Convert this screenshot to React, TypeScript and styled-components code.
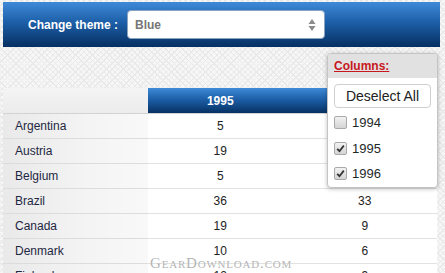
import React from "react";
import styled, { createGlobalStyle } from "styled-components";

const GlobalStyle = createGlobalStyle`
  html, body {
    margin: 0;
    padding: 0;
    width: 445px;
    height: 273px;
    overflow: hidden;
    font-family: "Liberation Sans", Arial, sans-serif;
    background-color: #f6f6f6;
    background-image:
      repeating-linear-gradient(45deg, transparent 0 3px, #e9e9e9 3px 4px),
      repeating-linear-gradient(-45deg, transparent 0 3px, #e9e9e9 3px 4px);
  }
`;

const Page = styled.div`
  position: relative;
  padding: 2px 0 0 3px;
`;

const ThemeBar = styled.div`
  width: 437px;
  height: 45px;
  display: flex;
  align-items: center;
  gap: 9px;
  padding-left: 25px;
  box-sizing: border-box;
  background: linear-gradient(to bottom, #3f8ad8 0%, #1d5fa8 45%, #063062 100%);
`;

const ThemeLabel = styled.span`
  color: #fff;
  font-size: 12px;
  font-weight: bold;
`;

const ThemeSelect = styled.div`
  width: 198px;
  height: 29px;
  box-sizing: border-box;
  background: #fff;
  border: 1px solid #8aa3c0;
  border-radius: 4px;
  display: flex;
  align-items: center;
  justify-content: space-between;
  padding: 0 8px 0 7px;
  color: #767676;
  font-size: 12px;
  font-weight: bold;
`;

const Table = styled.table`
  margin-top: 41px;
  width: 434px;
  border-collapse: collapse;
  table-layout: fixed;
  font-size: 12px;
`;

const HeadCorner = styled.th`
  width: 145px;
  height: 25px;
  padding: 0;
  background: linear-gradient(to bottom, #f4f4f4, #ececec);
  border-bottom: 1px solid #d2d2d2;
`;

const HeadYear = styled.th`
  height: 25px;
  padding: 0;
  color: #fff;
  font-weight: bold;
  text-align: center;
  background: linear-gradient(to bottom, #3f8ad8 0%, #1d5fa8 45%, #063062 100%);
  border-bottom: 1px solid #d2d2d2;
`;

const CountryCell = styled.td`
  height: 24px;
  padding: 0 0 0 12px;
  color: #1e2742;
  background: linear-gradient(to right, #e9e9e9, #f4f4f4 60%, #f8f8f8);
  border-bottom: 1px solid #dcdcdc;
`;

const ValueCell = styled.td`
  height: 24px;
  padding: 0;
  text-align: center;
  color: #222;
  background: #fff;
  border-bottom: 1px solid #e2e2e2;
`;

const ColumnsPopup = styled.div`
  position: absolute;
  left: 327px;
  top: 53px;
  width: 111px;
  height: 135px;
  box-sizing: border-box;
  background: #fff;
  border: 1px solid #c4c4c4;
  border-radius: 4px;
  box-shadow: 0 1px 4px rgba(0, 0, 0, 0.25);
  overflow: hidden;
`;

const PopupTitle = styled.div`
  height: 24px;
  background: #e1e1e1;
  padding: 5px 0 0 6px;
  box-sizing: border-box;
  color: #c8161d;
  font-size: 12px;
  font-weight: bold;
  text-decoration: underline;
`;

const DeselectButton = styled.div`
  margin: 6px 6px 2px 6px;
  height: 24px;
  box-sizing: border-box;
  border: 1px solid #cfcfcf;
  border-radius: 4px;
  display: flex;
  align-items: center;
  justify-content: center;
  font-size: 14px;
  color: #222;
`;

const CheckRow = styled.div`
  height: 25.5px;
  display: flex;
  align-items: center;
  gap: 5px;
  padding-left: 6px;
  font-size: 13px;
  color: #1e2a2a;
`;

const Box = styled.span`
  width: 11px;
  height: 11px;
  border: 1px solid #a9a9a9;
  border-radius: 2px;
  background: linear-gradient(to bottom, #f2f2f2, #d4d4d4);
  display: flex;
  align-items: center;
  justify-content: center;
`;

const Watermark = styled.div`
  position: absolute;
  left: 150px;
  top: 255px;
  font-family: "Liberation Serif", "DejaVu Serif", serif;
  font-variant: small-caps;
  font-size: 15px;
  letter-spacing: 0.8px;
  color: rgba(170, 170, 170, 0.9);
  text-shadow: 0 0 1px #fff;
`;

const rows: [string, number, number][] = [
  ["Argentina", 5, 4],
  ["Austria", 19, 17],
  ["Belgium", 5, 6],
  ["Brazil", 36, 33],
  ["Canada", 19, 9],
  ["Denmark", 10, 6],
  ["Finland", 12, 9],
];

const Check = ({ on }: { on: boolean }) => (
  <Box>
    {on && (
      <svg width="9" height="9" viewBox="0 0 9 9">
        <path d="M1.2 4.8 L3.5 7.2 L7.8 1.6" stroke="#333" strokeWidth="1.8" fill="none" />
      </svg>
    )}
  </Box>
);

export default function App() {
  return (
    <>
      <GlobalStyle />
      <Page>
        <ThemeBar>
          <ThemeLabel>Change theme :</ThemeLabel>
          <ThemeSelect>
            Blue
            <svg width="8" height="14" viewBox="0 0 8 14">
              <path d="M4 1 L7.5 6 H0.5 Z" fill="#8a8a8a" />
              <path d="M4 13 L7.5 8 H0.5 Z" fill="#8a8a8a" />
            </svg>
          </ThemeSelect>
        </ThemeBar>
        <Table>
          <thead>
            <tr>
              <HeadCorner />
              <HeadYear>1995</HeadYear>
              <HeadYear>1996</HeadYear>
            </tr>
          </thead>
          <tbody>
            {rows.map(([name, a, b]) => (
              <tr key={name}>
                <CountryCell>{name}</CountryCell>
                <ValueCell>{a}</ValueCell>
                <ValueCell>{b}</ValueCell>
              </tr>
            ))}
          </tbody>
        </Table>
        <ColumnsPopup>
          <PopupTitle>Columns:</PopupTitle>
          <DeselectButton>Deselect All</DeselectButton>
          <CheckRow>
            <Check on={false} />
            1994
          </CheckRow>
          <CheckRow>
            <Check on />
            1995
          </CheckRow>
          <CheckRow>
            <Check on />
            1996
          </CheckRow>
        </ColumnsPopup>
        <Watermark>GearDownload.com</Watermark>
      </Page>
    </>
  );
}
